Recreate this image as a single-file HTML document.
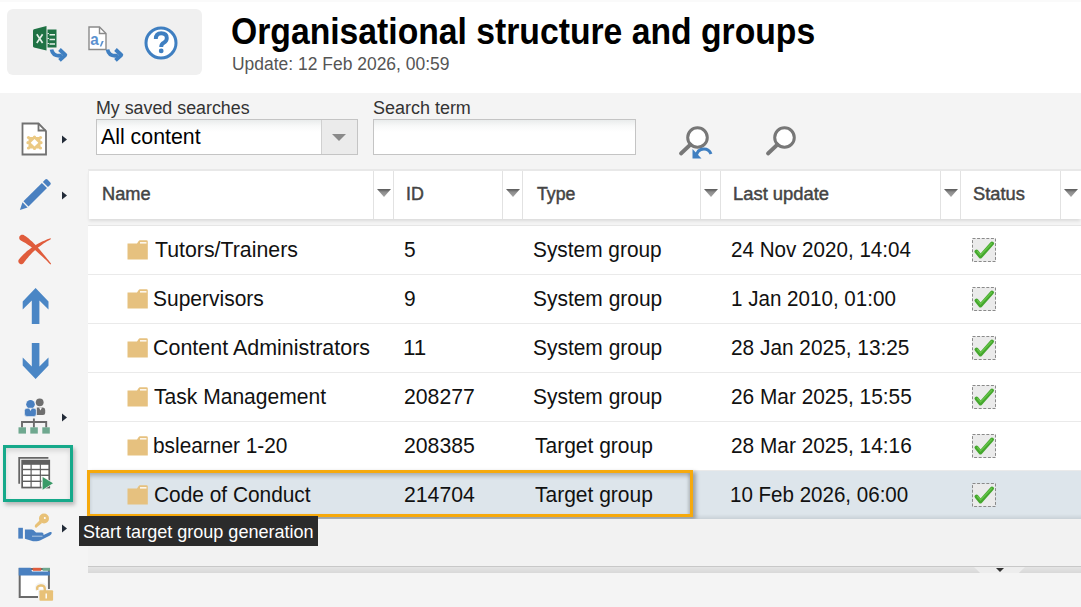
<!DOCTYPE html>
<html><head><meta charset="utf-8">
<style>
*{margin:0;padding:0;box-sizing:border-box}
html,body{width:1081px;height:607px;overflow:hidden;background:#fff;font-family:"Liberation Sans",sans-serif;position:relative}
.abs{position:absolute}
.t{position:absolute;white-space:nowrap;line-height:1;transform-origin:0 0}
#tb{left:7px;top:9px;width:195px;height:66px;background:#f0f0f0;border-radius:6px}
#main{left:0;top:93px;width:1081px;height:514px;background:#f4f4f4}
.sel{background:linear-gradient(#e9ecec 0,#f8f9f9 6px,#fff 12px);border:1px solid #c4c4c4}
#hdr{left:88px;top:169px;width:993px;height:50px;background:#fff;border-top:2px solid #e8e8e8;border-left:1px solid #ececec;box-shadow:0 3px 3px -1px rgba(0,0,0,.1)}
.sep{position:absolute;top:0;width:1px;height:48px;background:#e2e2e2}
.farr{position:absolute;top:18px;width:14px;height:8px;background:linear-gradient(#5a5a5a 0,#6e6e6e 1.5px,#8c8c8c 3px,#a4a4a4 8px);clip-path:polygon(0 0,100% 0,50% 100%)}
#rows{left:88px;top:225px;width:993px;height:294px;background:#fff;border-top:1px solid #e6e6e6}
.row{position:absolute;left:0;width:993px;height:49px;border-bottom:1px solid #eaeaea}
.fold{position:absolute;left:38.8px;top:14px;width:21px;height:20px}
.chk{position:absolute;left:884px;top:12px;width:24px;height:24px}
.selrow{background:linear-gradient(#dde5eb 0,#dde5eb 43px,#c9d1d7 48px);border-bottom-color:#c9d1d7}

</style></head><body>
<svg width="0" height="0" style="position:absolute">
<defs>
<symbol id="folder" viewBox="0 0 21 20">
  <path d="M0.5 3.5 H10 L11.5 1.2 Q12 0.3 13 0.3 H19.5 Q20.8 0.3 20.8 1.6 V19.5 H0.5 Z" fill="#e6c17f"/>
  <rect x="13" y="2" width="6.5" height="1.6" fill="#fff" opacity=".85"/>
</symbol>
<symbol id="check" viewBox="0 0 24 24">
  <rect x="0.5" y="0.5" width="23" height="23" fill="#ebebeb" stroke="#8a8a8a" stroke-width="1" stroke-dasharray="3 1.6"/>
  <path d="M4.5 13.5 L8.5 18.5 L20 5.5" fill="none" stroke="#45a72e" stroke-width="4" stroke-linejoin="round" stroke-linecap="round"/>
  <path d="M5.5 13.5 L8.5 17 L19.5 5.5" fill="none" stroke="#6dcc4f" stroke-width="1.4" stroke-linecap="round" opacity=".8"/>
</symbol>
</defs></svg>
<div class="abs" style="left:0;top:0;width:1081px;height:2px;background:#fafafa"></div>
<div class="abs" id="tb"></div>
<div class="t" style="left:231.18px;top:13.28px;font-size:37px;font-weight:bold;color:#000;transform:scaleX(0.9107);">Organisational structure and groups</div>
<div class="t" style="left:231.73px;top:54.86px;font-size:18px;font-weight:normal;color:#555;transform:scaleX(0.9700);">Update: 12 Feb 2026, 00:59</div>
<div class="abs" id="main"></div>
<div class="t" style="left:95.51px;top:98.76px;font-size:18px;font-weight:normal;color:#333;transform:scaleX(0.9902);">My saved searches</div>
<div class="abs sel" style="left:96px;top:119px;width:262px;height:36px"></div>
<div class="abs" style="left:321px;top:120px;width:36px;height:34px;background:#ebebeb;border-left:1px solid #d0d0d0"></div>
<div class="abs" style="left:332px;top:134px;width:0;height:0;border-left:7px solid transparent;border-right:7px solid transparent;border-top:7px solid #8a8a8a"></div>
<div class="t" style="left:101.40px;top:125.65px;font-size:22.5px;font-weight:normal;color:#000;transform:scaleX(0.9476);">All content</div>
<div class="t" style="left:372.60px;top:98.76px;font-size:18px;font-weight:normal;color:#333;transform:scaleX(0.9979);">Search term</div>
<div class="abs sel" style="left:373px;top:119px;width:263px;height:36px"></div>

<div class="abs" id="hdr">
  <div class="sep" style="left:284px"></div><div class="farr" style="left:288px"></div><div class="sep" style="left:304px"></div>
  <div class="sep" style="left:413px"></div><div class="farr" style="left:417px"></div><div class="sep" style="left:433px"></div>
  <div class="sep" style="left:611px"></div><div class="farr" style="left:615px"></div><div class="sep" style="left:631px"></div>
  <div class="sep" style="left:851px"></div><div class="farr" style="left:855px"></div><div class="sep" style="left:871px"></div>
  <div class="sep" style="left:971px"></div><div class="farr" style="left:975px"></div>
</div>
<div class="t" style="left:102.46px;top:185.89px;font-size:17.5px;font-weight:normal;color:#444;transform:scaleX(1.0400);-webkit-text-stroke:0.45px #444;">Name</div>
<div class="t" style="left:405.76px;top:185.89px;font-size:17.5px;font-weight:normal;color:#444;transform:scaleX(1.0200);-webkit-text-stroke:0.45px #444;">ID</div>
<div class="t" style="left:536.50px;top:185.89px;font-size:17.5px;font-weight:normal;color:#444;transform:scaleX(1.0108);-webkit-text-stroke:0.45px #444;">Type</div>
<div class="t" style="left:732.95px;top:185.89px;font-size:17.5px;font-weight:normal;color:#444;transform:scaleX(1.0500);-webkit-text-stroke:0.45px #444;">Last update</div>
<div class="t" style="left:973.46px;top:185.89px;font-size:17.5px;font-weight:normal;color:#444;transform:scaleX(1.0437);-webkit-text-stroke:0.45px #444;">Status</div>

<div class="abs" id="rows">
<div class="row" style="top:0px"><svg class="fold" viewBox="0 0 21 20"><use href="#folder"/></svg><svg class="chk" viewBox="0 0 24 24"><use href="#check"/></svg></div>
<div class="row" style="top:49px"><svg class="fold" viewBox="0 0 21 20"><use href="#folder"/></svg><svg class="chk" viewBox="0 0 24 24"><use href="#check"/></svg></div>
<div class="row" style="top:98px"><svg class="fold" viewBox="0 0 21 20"><use href="#folder"/></svg><svg class="chk" viewBox="0 0 24 24"><use href="#check"/></svg></div>
<div class="row" style="top:147px"><svg class="fold" viewBox="0 0 21 20"><use href="#folder"/></svg><svg class="chk" viewBox="0 0 24 24"><use href="#check"/></svg></div>
<div class="row" style="top:196px"><svg class="fold" viewBox="0 0 21 20"><use href="#folder"/></svg><svg class="chk" viewBox="0 0 24 24"><use href="#check"/></svg></div>
<div class="row selrow" style="top:245px"><svg class="fold" viewBox="0 0 21 20"><use href="#folder"/></svg><svg class="chk" viewBox="0 0 24 24"><use href="#check"/></svg></div>
</div>
<div class="t" style="left:155.20px;top:238.55px;font-size:22.5px;font-weight:normal;color:#111;transform:scaleX(0.9473);">Tutors/Trainers</div>
<div class="t" style="left:404.17px;top:238.55px;font-size:22.5px;font-weight:normal;color:#111;transform:scaleX(0.9300);">5</div>
<div class="t" style="left:532.67px;top:238.55px;font-size:22.5px;font-weight:normal;color:#111;transform:scaleX(0.9270);">System group</div>
<div class="t" style="left:730.78px;top:238.55px;font-size:22.5px;font-weight:normal;color:#111;transform:scaleX(0.9164);">24 Nov 2020, 14:04</div>
<div class="t" style="left:153.47px;top:287.55px;font-size:22.5px;font-weight:normal;color:#111;transform:scaleX(0.9325);">Supervisors</div>
<div class="t" style="left:404.17px;top:287.55px;font-size:22.5px;font-weight:normal;color:#111;transform:scaleX(0.9300);">9</div>
<div class="t" style="left:533.17px;top:287.55px;font-size:22.5px;font-weight:normal;color:#111;transform:scaleX(0.9307);">System group</div>
<div class="t" style="left:731.47px;top:287.55px;font-size:22.5px;font-weight:normal;color:#111;transform:scaleX(0.9152);">1 Jan 2010, 01:00</div>
<div class="t" style="left:153.45px;top:336.55px;font-size:22.5px;font-weight:normal;color:#111;transform:scaleX(0.9535);">Content Administrators</div>
<div class="t" style="left:403.31px;top:336.55px;font-size:22.5px;font-weight:normal;color:#111;transform:scaleX(0.9950);">11</div>
<div class="t" style="left:533.17px;top:336.55px;font-size:22.5px;font-weight:normal;color:#111;transform:scaleX(0.9307);">System group</div>
<div class="t" style="left:730.87px;top:336.55px;font-size:22.5px;font-weight:normal;color:#111;transform:scaleX(0.9262);">28 Jan 2025, 13:25</div>
<div class="t" style="left:154.40px;top:385.55px;font-size:22.5px;font-weight:normal;color:#111;transform:scaleX(0.9359);">Task Management</div>
<div class="t" style="left:404.36px;top:385.55px;font-size:22.5px;font-weight:normal;color:#111;transform:scaleX(0.9438);">208277</div>
<div class="t" style="left:533.17px;top:385.55px;font-size:22.5px;font-weight:normal;color:#111;transform:scaleX(0.9307);">System group</div>
<div class="t" style="left:730.87px;top:385.55px;font-size:22.5px;font-weight:normal;color:#111;transform:scaleX(0.9264);">26 Mar 2025, 15:55</div>
<div class="t" style="left:153.47px;top:434.55px;font-size:22.5px;font-weight:normal;color:#111;transform:scaleX(0.9266);">bslearner 1-20</div>
<div class="t" style="left:404.36px;top:434.55px;font-size:22.5px;font-weight:normal;color:#111;transform:scaleX(0.9438);">208385</div>
<div class="t" style="left:535.00px;top:434.55px;font-size:22.5px;font-weight:normal;color:#111;transform:scaleX(0.9328);">Target group</div>
<div class="t" style="left:730.87px;top:434.55px;font-size:22.5px;font-weight:normal;color:#111;transform:scaleX(0.9264);">28 Mar 2025, 14:16</div>
<div class="t" style="left:153.77px;top:483.55px;font-size:22.5px;font-weight:normal;color:#111;transform:scaleX(0.9274);">Code of Conduct</div>
<div class="t" style="left:404.36px;top:483.55px;font-size:22.5px;font-weight:normal;color:#111;transform:scaleX(0.9438);">214704</div>
<div class="t" style="left:535.00px;top:483.55px;font-size:22.5px;font-weight:normal;color:#111;transform:scaleX(0.9328);">Target group</div>
<div class="t" style="left:729.97px;top:483.55px;font-size:22.5px;font-weight:normal;color:#111;transform:scaleX(0.9130);">10 Feb 2026, 06:00</div>

<div class="abs" id="orange" style="left:87px;top:470px;width:606px;height:47px;border:3px solid #f6a90c;box-shadow:inset 0 4px 4px -1px rgba(0,0,0,.22),inset -3px 0 3px -1px rgba(0,0,0,.12),3px 2px 4px rgba(0,0,0,.3)"></div>
<div class="abs" style="left:88px;top:519px;width:993px;height:47px;background:#f2f2f2"></div>
<div class="abs" id="split" style="left:88px;top:566px;width:993px;height:7px;background:linear-gradient(#c8c8c8 0,#c8c8c8 1px,#e4e4e4 1px,#d8d8d8 7px)"></div>
<div class="abs" style="left:974px;top:567px;width:51px;height:6px;background:#ededed;clip-path:polygon(0 0,100% 0,88% 100%,12% 100%)"></div>
<div class="abs" style="left:996px;top:568px;width:0;height:0;border-left:4px solid transparent;border-right:4px solid transparent;border-top:4px solid #333"></div>

<div class="abs" id="teal" style="left:3px;top:445px;width:70px;height:57px;border:3px solid #16a98a;box-shadow:2px 3px 4px rgba(0,0,0,.25), inset 0 3px 5px rgba(0,0,0,.12)"></div>

<div class="abs" id="tip" style="left:79px;top:516px;width:239px;height:30px;background:#2b2b2b"></div>
<div class="t" style="left:82.63px;top:522.94px;font-size:18.5px;font-weight:normal;color:#fff;transform:scaleX(0.9748);">Start target group generation</div>
<svg class="abs" style="left:0;top:0" width="1081" height="607" viewBox="0 0 1081 607">
 <!-- Excel -->
 <path d="M33 30.5 Q33 29.5 34 29.2 L46.5 26 V50.5 L34 47.5 Q33 47.2 33 46.2 Z" fill="#1f7244"/>
 <rect x="47.5" y="29.5" width="9" height="18" fill="#1f7244"/>
 <path d="M36.8 34.3 L42.6 43 M42.6 34.3 L36.8 43" stroke="#e3efe6" stroke-width="1.7"/>
 <path d="M49.5 34.8 H55 M49.5 39.4 H55 M49.5 44 H55" stroke="#e3efe6" stroke-width="1.5"/>
 <path d="M47.5 33.5 H49 M47.5 38.5 H49 M47.5 43.5 H49" stroke="#f0f0f0" stroke-width="0.9"/>
 <path d="M51.5 49.5 Q53 57 62 55.5" fill="none" stroke="#3f7fc1" stroke-width="3.8"/>
 <path d="M59.5 49.5 L65.3 55 L59.5 60.3" fill="none" stroke="#3f7fc1" stroke-width="3.8" stroke-linejoin="round"/>
 <!-- doc a, -->
 <path d="M89 27 H99.5 L106 33.5 V49.5 H89 Z" fill="#fff" stroke="#8a8a8a" stroke-width="1.4"/>
 <path d="M99.5 27 V33.5 H106" fill="none" stroke="#8a8a8a" stroke-width="1.4"/>
 <text x="90.3" y="44.6" font-family="Liberation Sans" font-weight="bold" font-size="17" fill="#5b91cf" transform="translate(90.3 0) scale(0.9 1) translate(-90.3 0)">a</text>
 <path d="M101.8 41 L103.8 41 L101.3 46.5 L99.8 46.5 Z" fill="#5b91cf"/>
 <path d="M107.5 49.5 Q109 57 118 55.5" fill="none" stroke="#3f7fc1" stroke-width="3.8"/>
 <path d="M115.5 49.5 L121.3 55 L115.5 60.3" fill="none" stroke="#3f7fc1" stroke-width="3.8" stroke-linejoin="round"/>
 <!-- help -->
 <circle cx="161" cy="43" r="15" fill="#fff" stroke="#3f7fc1" stroke-width="3"/>
 <path d="M155.8 39 Q155.8 33.2 161.2 33.2 Q166.8 33.2 166.8 38 Q166.8 41.2 163.8 42.8 Q161.2 44.2 161.2 47" fill="none" stroke="#3f7fc1" stroke-width="3.9"/>
 <circle cx="161.2" cy="50.9" r="2.4" fill="#3f7fc1"/>

 <!-- search icons -->
 <circle cx="697.5" cy="137.5" r="9.8" fill="#fff" stroke="#777" stroke-width="3"/>
 <path d="M690.5 144.5 L681 153.5" stroke="#777" stroke-width="3.8" stroke-linecap="round"/>
 <path d="M696 157 Q697 149 704 149 Q709 149 711 154" fill="none" stroke="#3f7fc1" stroke-width="3"/>
 <path d="M692.5 149 V158.5 H701.5 Z" fill="#3f7fc1"/>
 <circle cx="784.5" cy="137.5" r="9.8" fill="#fff" stroke="#777" stroke-width="3"/>
 <path d="M777.5 144.5 L768 153.5" stroke="#777" stroke-width="3.8" stroke-linecap="round"/>

 <!-- sidebar: doc gear -->
 <path d="M22.5 123.5 H38.5 L46 131 V154.5 H22.5 Z" fill="#fff" stroke="#717171" stroke-width="1.8"/>
 <path d="M38.5 123.5 V130.5 H46" fill="none" stroke="#717171" stroke-width="1.8"/>
 <g fill="#ebc983">
  <rect x="28.5" y="137" width="12" height="11.5"/>
  <circle cx="28.5" cy="137.5" r="1.6"/><circle cx="34.5" cy="137" r="1.6"/><circle cx="40.5" cy="137.5" r="1.6"/>
  <circle cx="28.5" cy="148" r="1.6"/><circle cx="34.5" cy="148.5" r="1.6"/><circle cx="40.5" cy="148" r="1.6"/>
  <circle cx="28" cy="142.7" r="1.6"/><circle cx="41" cy="142.7" r="1.6"/>
 </g>
 <path d="M34.5 139 L38.3 142.7 L34.5 146.5 L30.7 142.7 Z" fill="#fff"/>
 <path d="M62 135.5 V143.5 L67 139.5 Z" fill="#222b38"/>

 <!-- pencil -->
 <g transform="translate(19.9 210) rotate(-45)">
  <path d="M0 0 L7.3 -3.6 V3.6 Z" fill="#4a80c0"/>
  <rect x="8.6" y="-3.6" width="26.1" height="7.2" fill="#4a80c0"/>
  <path d="M36.1 -3.6 H39.4 Q41 -3.6 41 -2 V2 Q41 3.6 39.4 3.6 H36.1 Z" fill="#4a80c0"/>
 </g>
 <path d="M62 191.5 V199.5 L67 195.5 Z" fill="#222b38"/>

 <!-- X -->
 <path d="M20.84 240.54 L21.68 240.95 L22.56 241.41 L23.48 241.91 L24.45 242.46 L25.45 243.06 L26.48 243.72 L27.55 244.42 L28.65 245.18 L29.79 246.00 L30.96 246.86 L32.16 247.78 L33.39 248.75 L34.65 249.77 L35.94 250.85 L37.26 251.98 L38.61 253.16 L39.98 254.40 L41.39 255.69 L42.83 257.03 L44.29 258.42 L45.78 259.87 L47.30 261.37 L48.85 262.92 L50.42 264.53 L51.18 263.87 L49.81 262.08 L48.47 260.34 L47.14 258.65 L45.84 257.01 L44.56 255.42 L43.30 253.89 L42.06 252.40 L40.84 250.97 L39.64 249.59 L38.46 248.26 L37.30 246.98 L36.16 245.75 L35.04 244.57 L33.94 243.45 L32.86 242.37 L31.79 241.35 L30.74 240.38 L29.71 239.46 L28.69 238.59 L27.68 237.77 L26.69 237.01 L25.70 236.30 L24.73 235.65 L23.76 235.06 L23.00 234.78 L22.19 234.70 L21.40 234.83 L20.66 235.17 L20.03 235.68 L19.56 236.34 L19.28 237.10 L19.20 237.91 L19.33 238.70 L19.67 239.44 L20.18 240.07 Z" fill="#e05c3c"/>
 <path d="M23.70 263.01 L24.53 261.86 L25.37 260.73 L26.24 259.60 L27.13 258.48 L28.05 257.38 L28.99 256.29 L29.96 255.21 L30.95 254.15 L31.98 253.10 L33.03 252.06 L34.12 251.04 L35.23 250.03 L36.38 249.03 L37.55 248.05 L38.75 247.08 L39.99 246.13 L41.26 245.19 L42.55 244.27 L43.88 243.36 L45.24 242.47 L46.64 241.59 L48.06 240.73 L49.52 239.88 L51.00 239.06 L50.60 238.14 L48.98 238.74 L47.39 239.35 L45.82 239.99 L44.27 240.66 L42.75 241.34 L41.26 242.06 L39.79 242.80 L38.34 243.56 L36.92 244.35 L35.53 245.17 L34.16 246.01 L32.82 246.87 L31.50 247.77 L30.21 248.69 L28.95 249.63 L27.71 250.61 L26.50 251.61 L25.32 252.63 L24.17 253.69 L23.05 254.77 L21.96 255.88 L20.91 257.02 L19.88 258.19 L18.90 259.39 L18.52 260.08 L18.32 260.83 L18.33 261.62 L18.54 262.37 L18.94 263.05 L19.49 263.60 L20.18 263.98 L20.93 264.18 L21.72 264.17 L22.47 263.96 L23.15 263.56 Z" fill="#e05c3c"/>

 <!-- up arrow -->
 <path d="M35.6 288 L48.5 301.5 V309.5 L39.4 300.5 V324 H31.8 V300.5 L22.7 309.5 V301.5 Z" fill="#4a86c5"/>
 <!-- down arrow -->
 <path d="M35.6 379 L48.5 365.5 V357.5 L39.4 366.5 V343 H31.8 V366.5 L22.7 357.5 V365.5 Z" fill="#4a86c5"/>

 <!-- group -->
 <circle cx="39.7" cy="402.3" r="3.9" fill="#6e6e6e"/>
 <path d="M36.8 407.5 H43 Q45.2 407.5 45.2 410 V413 Q45.2 415 43 415 H36.8 Z" fill="#6e6e6e"/>
 <path d="M39 407.5 L40.5 410.5 L42 407.5 Z" fill="#f4f4f4"/>
 <circle cx="30.5" cy="404.2" r="4.4" fill="#fff"/>
 <circle cx="30.5" cy="404.2" r="4.3" fill="#4a80c0"/>
 <path d="M24.5 410.5 Q24.5 408.2 27 408.2 H34 Q36.3 408.2 36.3 410.5 V414 Q36.3 416.6 33.5 416.6 H27.3 Q24.5 416.6 24.5 414 Z" fill="#4a80c0" stroke="#f4f4f4" stroke-width=".6"/>
 <path d="M29 408.2 L30.5 411 L32 408.2 Z" fill="#f4f4f4"/>
 <path d="M33.9 418.5 V427.5 M22 427.5 V422 H46.2 V427.5" fill="none" stroke="#6a6a6a" stroke-width="1.9"/>
 <rect x="18.5" y="427.3" width="7.5" height="6.3" fill="#6fa88f"/>
 <rect x="30.3" y="427.3" width="7.5" height="6.3" fill="#6fa88f"/>
 <rect x="42.3" y="427.3" width="7.5" height="6.3" fill="#6fa88f"/>
 <path d="M62 413.5 V421.5 L67 417.5 Z" fill="#222b38"/>

 <!-- table icon -->
 <path d="M19.2 483.8 V457.8 H48.4" fill="none" stroke="#666" stroke-width="1.8"/>
 <rect x="21.3" y="459.8" width="28.8" height="28.6" fill="#5f5f5f"/>
 <g fill="#fff">
  <rect x="23" y="464.8" width="7.5" height="4"/><rect x="31.7" y="464.8" width="8.1" height="4"/><rect x="40.9" y="464.8" width="7.5" height="4"/>
  <rect x="23" y="470.2" width="7.5" height="4.4"/><rect x="31.7" y="470.2" width="8.1" height="4.4"/><rect x="40.9" y="470.2" width="7.5" height="4.4"/>
  <rect x="23" y="476" width="7.5" height="4.6"/><rect x="31.7" y="476" width="8.1" height="4.6"/><rect x="40.9" y="476" width="7.5" height="4.6"/>
  <rect x="23" y="482" width="7.5" height="4.7"/><rect x="31.7" y="482" width="8.1" height="4.7"/><rect x="40.9" y="482" width="7.5" height="4.7"/>
 </g>
 <path d="M41.5 475.5 L54.5 483.3 L41.5 491 Z" fill="#f4f4f4"/>
 <path d="M42.6 477 L53 483.3 L42.6 489.7 Z" fill="#3a9a68"/>

 <!-- hand key -->
 <rect x="18.3" y="527.8" width="4.6" height="10.8" fill="#4a80c0"/>
 <path d="M24.9 529.4 H31.5 Q33.5 529.4 35 531.5 L36 532.5 H42 Q43.5 532.5 43.5 534 V535 L50 532 Q51.8 531.5 51.8 533 Q51.5 534.5 49.5 535.8 L40 540.5 Q38.5 541.3 36.5 541.3 H33 L24.9 538.8 Z" fill="#4a80c0"/>
 <path d="M32 536.2 H42.5" stroke="#bcd0e8" stroke-width=".9"/>
 <g fill="#e8c177">
  <circle cx="44" cy="518.5" r="5"/>
  <path d="M40 520 L35 525 Q34 527 36 528 L42 523 Z"/>
 </g>
 <circle cx="44.8" cy="518" r="1" fill="#fff"/>
 <path d="M62 524.5 V532.5 L67 528.5 Z" fill="#222b38"/>

 <!-- window lock -->
 <rect x="19.7" y="569" width="29.2" height="28" fill="#fff" stroke="#6a6a6a" stroke-width="2"/>
 <path d="M18.7 567.8 H30.7 L32 571.4 H49.9 V575.4 H18.7 Z" fill="#4a80c0"/>
 <rect x="32.8" y="567.8" width="8.4" height="3" fill="#e05c3c"/>
 <rect x="42.6" y="567.8" width="7.3" height="3" fill="#6fa88f"/>
 <path d="M37.5 590 Q36 585.5 40.5 584.8 Q45.5 584.3 45.5 589 V591" fill="none" stroke="#f4f4f4" stroke-width="4.5"/>
 <rect x="38" y="589" width="16.5" height="13" fill="#f4f4f4"/>
 <path d="M37.5 590 Q36 586 40.5 585.5 Q44.8 585 44.8 589 V591" fill="none" stroke="#e8c177" stroke-width="2.4"/>
 <rect x="39.4" y="590.3" width="13.7" height="10.5" rx="1" fill="#e8c177"/>
 <path d="M46.2 593.5 V598.5" stroke="#fff" stroke-width="1.4"/>
</svg>

</body></html>
